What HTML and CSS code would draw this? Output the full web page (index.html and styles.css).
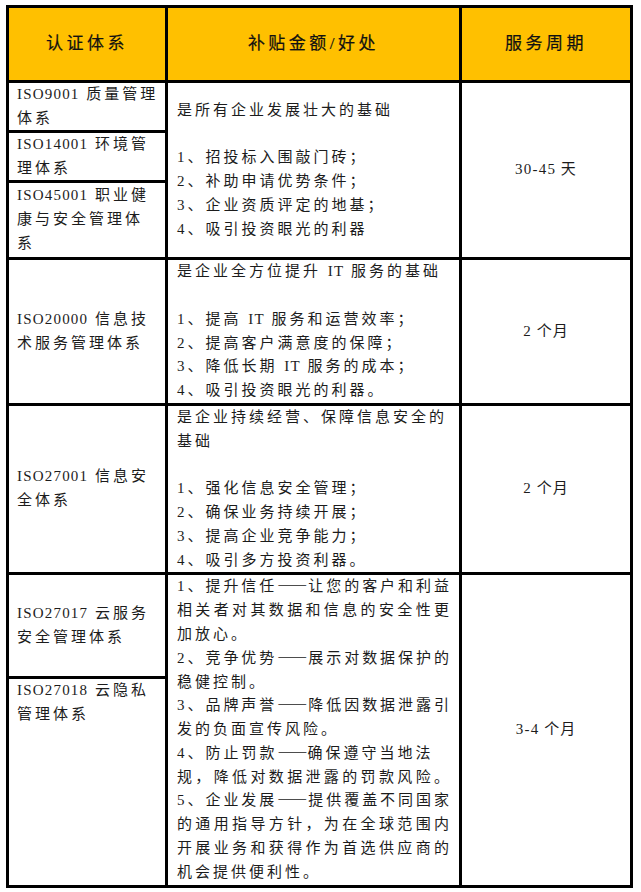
FILE: index.html
```html
<!DOCTYPE html>
<html lang="zh-CN">
<head>
<meta charset="utf-8">
<title>认证体系</title>
<link rel="stylesheet" href="styles.css">
</head>
<body>
<div class="table">
  <div class="cell head c1 r1">认证体系</div>
  <div class="cell head c2 r1">补贴金额/好处</div>
  <div class="cell head c3 r1">服务周期</div>

  <div class="cell left c1 r2"><div><span class="en">ISO9001</span> 质量管理</div><div>体系</div></div>
  <div class="cell left c1 r3"><div><span class="en">ISO14001</span> 环境管</div><div>理体系</div></div>
  <div class="cell left c1 r4"><div><span class="en">ISO45001</span> 职业健</div><div>康与安全管理体</div><div>系</div></div>
  <div class="cell mid c2 r2-4">
    <div>是所有企业发展壮大的基础</div>
    <div class="blank">&nbsp;</div>
    <div>1、招投标入围敲门砖；</div>
    <div>2、补助申请优势条件；</div>
    <div>3、企业资质评定的地基；</div>
    <div>4、吸引投资眼光的利器</div>
  </div>
  <div class="cell per c3 r2-4"><div><span class="en">30-45</span> 天</div></div>

  <div class="cell left c1 r5"><div><span class="en">ISO20000</span> 信息技</div><div>术服务管理体系</div></div>
  <div class="cell mid c2 r5">
    <div>是企业全方位提升 <span class="en">IT</span> 服务的基础</div>
    <div class="blank">&nbsp;</div>
    <div>1、提高 <span class="en">IT</span> 服务和运营效率；</div>
    <div>2、提高客户满意度的保障；</div>
    <div>3、降低长期 <span class="en">IT</span> 服务的成本；</div>
    <div>4、吸引投资眼光的利器。</div>
  </div>
  <div class="cell per c3 r5"><div><span class="en">2</span> 个月</div></div>

  <div class="cell left c1 r6"><div><span class="en">ISO27001</span> 信息安</div><div>全体系</div></div>
  <div class="cell mid c2 r6">
    <div>是企业持续经营、保障信息安全的</div>
    <div>基础</div>
    <div class="blank">&nbsp;</div>
    <div>1、强化信息安全管理；</div>
    <div>2、确保业务持续开展；</div>
    <div>3、提高企业竞争能力；</div>
    <div>4、吸引多方投资利器。</div>
  </div>
  <div class="cell per c3 r6"><div><span class="en">2</span> 个月</div></div>

  <div class="cell left c1 r7"><div><span class="en">ISO27017</span> 云服务</div><div>安全管理体系</div></div>
  <div class="cell left top c1 r8"><div><span class="en">ISO27018</span> 云隐私</div><div>管理体系</div></div>
  <div class="cell mid c2 r7-8">
    <div class="j">1、提升信任<span class="dash">——</span>让您的客户和利益</div>
    <div class="j">相关者对其数据和信息的安全性更</div>
    <div>加放心。</div>
    <div class="j">2、竞争优势<span class="dash">——</span>展示对数据保护的</div>
    <div>稳健控制。</div>
    <div class="j">3、品牌声誉<span class="dash">——</span>降低因数据泄露引</div>
    <div>发的负面宣传风险。</div>
    <div>4、防止罚款<span class="dash">——</span>确保遵守当地法</div>
    <div class="j">规，降低对数据泄露的罚款风险。</div>
    <div class="j">5、企业发展<span class="dash">——</span>提供覆盖不同国家</div>
    <div class="j">的通用指导方针，为在全球范围内</div>
    <div class="j">开展业务和获得作为首选供应商的</div>
    <div>机会提供便利性。</div>
  </div>
  <div class="cell per c3 r7-8"><div><span class="en">3-4</span> 个月</div></div>
</div>
</body>
</html>
```

FILE: styles.css
```css
html, body {
  margin: 0;
  padding: 0;
  background: #ffffff;
}

body {
  font-family: "Liberation Serif", "Noto Sans CJK SC", serif;
  font-size: 15px;
  color: #1c1c1c;
}

.table {
  display: grid;
  grid-template-columns: 156px 291px 168px;
  grid-template-rows: 72px 47px 47px 74px 143px 166px 101px 206px;
  gap: 3px;
  padding: 3px;
  background: #000000;
  width: max-content;
  margin: 5px 0 0 6px;
}

.cell {
  background: #ffffff;
  display: flex;
  flex-direction: column;
  justify-content: center;
  line-height: 23.8px;
  letter-spacing: 3px;
  white-space: nowrap;
}

.cell > div {
  height: 23.8px;
  flex: none;
}

.c1 { grid-column: 1; }
.c2 { grid-column: 2; }
.c3 { grid-column: 3; }
.r1 { grid-row: 1; }
.r2 { grid-row: 2; }
.r3 { grid-row: 3; }
.r4 { grid-row: 4; }
.r2-4 { grid-row: 2 / 5; }
.r5 { grid-row: 5; }
.r6 { grid-row: 6; }
.r7 { grid-row: 7; }
.r8 { grid-row: 8; }
.r7-8 { grid-row: 7 / 9; }

.head {
  background: #ffc000;
  align-items: center;
  font-size: 17px;
  letter-spacing: 3.5px;
  color: #111111;
  -webkit-text-stroke: 0.2px #111111;
}

.left {
  padding: 0 6px 0 8px;
}

.left.top {
  justify-content: flex-start;
}

.mid {
  padding: 0 8px 0 9px;
}

.mid .j {
  text-align: justify;
  text-align-last: justify;
  letter-spacing: 2px;
}

.per {
  align-items: center;
  letter-spacing: 1px;
}

.en {
  letter-spacing: 1.2px;
}

.dash {
  font-family: "Noto Sans CJK SC", sans-serif;
  letter-spacing: 0;
  line-height: 0;
}
```
